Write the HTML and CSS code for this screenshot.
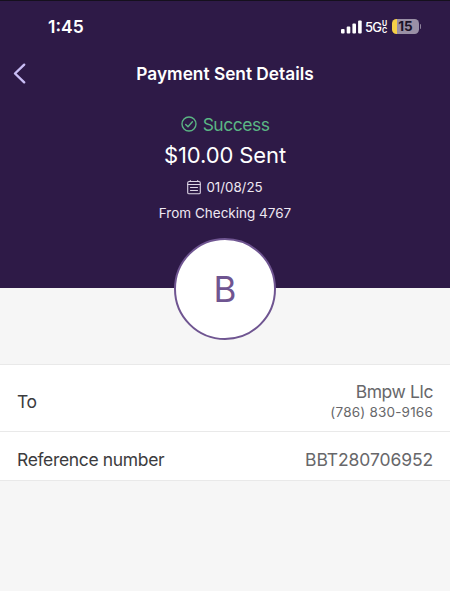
FILE: index.html
```html
<!DOCTYPE html>
<html lang="en">
<head>
    <meta charset="UTF-8">
    <meta name="viewport" content="width=device-width, initial-scale=1.0">
    <title>Payment Sent Details</title>
    <link rel="stylesheet" href="styles.css">
</head>
<body>
    <header>
        <div class="status-bar">
            <span class="time">1:45</span>
            <div class="status-icons">
                <svg class="signal" width="21" height="14" viewBox="0 0 21 14" fill="#fff">
                    <rect x="0" y="9" width="3.6" height="4.5" rx="1"/>
                    <rect x="5.7" y="6.5" width="3.6" height="7" rx="1"/>
                    <rect x="11.4" y="3.5" width="3.6" height="10" rx="1"/>
                    <rect x="17.1" y="0.5" width="3.6" height="13" rx="1"/>
                </svg>
                <span class="network">5G</span>
                <span class="network-uc"><span>U</span><span>C</span></span>
                <span class="battery">15</span>
                <span class="battery-cap"></span>
            </div>
        </div>

        <nav>
            <a href="#" class="back" aria-label="Back">
                <svg width="13" height="21" viewBox="0 0 13 21" fill="none" stroke="#c9bdf5" stroke-width="2.4" stroke-linecap="round" stroke-linejoin="round">
                    <path d="M11.2 1.7L2 10.5l9.2 8.8"/>
                </svg>
            </a>
            <h1>Payment Sent Details</h1>
        </nav>

        <div class="summary">
            <p class="payment-status">
                <svg width="16" height="16" viewBox="0 0 16 16" fill="none" stroke="#5bb584" stroke-width="1.4" stroke-linecap="round" stroke-linejoin="round">
                    <circle cx="8" cy="8" r="7"/>
                    <path d="M4.7 8.4l2.3 2.3 4.4-5"/>
                </svg>
                <span>Success</span>
            </p>
            <p class="amount">$10.00 Sent</p>
            <p class="date">
                <svg width="14" height="15" viewBox="0 0 14 15" fill="none" stroke="#ddd5e5" stroke-width="1.1" stroke-linecap="round" stroke-linejoin="round">
                    <rect x="0.7" y="1.5" width="12.6" height="12.3" rx="1.4"/>
                    <path d="M0.7 4.5h12.6M3.3 0.6v0.9M10.7 0.6v0.9M3.5 7.5h7M3.5 10.5h7"/>
                </svg>
                <span>01/08/25</span>
            </p>
            <p class="account">From Checking 4767</p>
        </div>
    </header>

    <main>
        <div class="avatar">B</div>

        <div class="details">
            <div class="row row-to">
                <span class="label">To</span>
                <div class="value">
                    <p class="name">Bmpw Llc</p>
                    <p class="phone">(786) 830-9166</p>
                </div>
            </div>
            <div class="row row-reference">
                <span class="label">Reference number</span>
                <span class="value">BBT280706952</span>
            </div>
        </div>
    </main>
</body>
</html>
```

FILE: styles.css
```css
/* General Styling */
* {
    box-sizing: border-box;
}

body {
    font-family: Inter, "Liberation Sans", sans-serif;
    margin: 0;
    background-color: #f6f6f6;
    color: #3c3c3e;
}

p, h1 {
    margin: 0;
}

header {
    height: 288px;
    background-color: #2e1a47;
    border-top: 1px solid #15101d;
    color: #fff;
}

/* Status Bar */
.status-bar {
    display: flex;
    justify-content: space-between;
    align-items: center;
    height: 51px;
    padding: 0 29px 0 48px;
}

.time {
    font-size: 17.5px;
    font-weight: 600;
}

.status-icons {
    display: flex;
    align-items: center;
}

.network {
    width: 17px;
    margin-left: 3px;
    font-size: 13px;
    font-weight: 500;
    letter-spacing: -0.8px;
}

.network-uc {
    display: flex;
    flex-direction: column;
    width: 6px;
    margin-right: 4px;
    font-size: 7px;
    font-weight: 700;
    line-height: 7px;
}

.battery {
    width: 27px;
    height: 15px;
    border-radius: 4.5px;
    background: linear-gradient(to right, #f5cf47 4.5px, #9a90a6 4.5px);
    color: #1b1326;
    font-size: 13.5px;
    font-weight: 700;
    line-height: 15px;
    text-align: center;
}

.battery-cap {
    width: 1px;
    height: 5px;
    margin-left: 1px;
    border-radius: 0 2px 2px 0;
    background-color: #8c819a;
}

/* Title */
nav {
    display: grid;
    grid-template-columns: 40px 1fr 40px;
    align-items: center;
    height: 43px;
}

.back {
    display: flex;
    padding-left: 13px;
}

h1 {
    font-size: 17.3px;
    font-weight: 600;
    text-align: center;
}

/* Payment Summary */
.summary {
    display: flex;
    flex-direction: column;
    align-items: center;
    padding-top: 17px;
}

.payment-status {
    display: flex;
    align-items: center;
    gap: 6px;
    height: 24px;
    color: #5bb584;
    font-size: 17.5px;
    letter-spacing: -0.5px;
}

.amount {
    height: 38px;
    font-size: 22px;
    letter-spacing: -0.1px;
    line-height: 38px;
}

.date {
    display: flex;
    align-items: center;
    gap: 5px;
    height: 26px;
    color: #eee8f2;
    font-size: 13.3px;
}

.account {
    height: 26px;
    color: #eee8f2;
    font-size: 13.5px;
    line-height: 26px;
}

/* Recipient */
.avatar {
    width: 102px;
    height: 102px;
    margin: -50px auto 24px;
    border: 2px solid #6f5591;
    border-radius: 50%;
    background-color: #fff;
    color: #6f5591;
    font-size: 35px;
    line-height: 99px;
    text-align: center;
}

.details {
    border-top: 1px solid #e9e9e9;
    background-color: #fff;
}

.row {
    display: flex;
    justify-content: space-between;
    align-items: center;
    padding: 0 17px;
    border-bottom: 1px solid #e9e9e9;
    font-size: 17.5px;
}

.row-to {
    height: 67px;
    padding-top: 7px;
}

.row-reference {
    height: 49px;
    padding-top: 7px;
}

.label {
    letter-spacing: -0.35px;
}

.value {
    color: #67676a;
    letter-spacing: -0.1px;
    text-align: right;
}

.name {
    letter-spacing: -0.4px;
    line-height: 20px;
}

.phone {
    font-size: 13.5px;
    letter-spacing: 0.2px;
    line-height: 20px;
}
```
